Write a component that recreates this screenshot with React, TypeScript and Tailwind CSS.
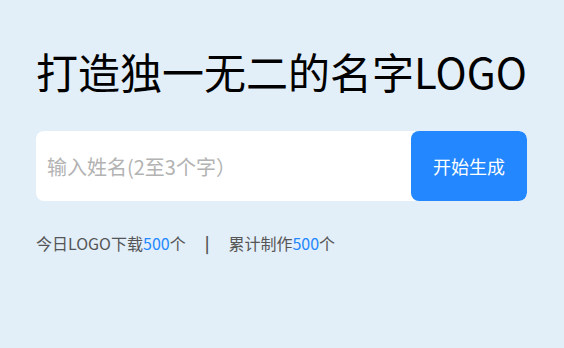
import React from 'react';

export default function App() {
  return (
    <div className="w-[564px] h-[348px] bg-[#e2eef8] px-[36px] pt-[50px] font-['Noto_Sans_CJK_SC',sans-serif]">
      {/* Title */}
      <h1 className="text-[42px] leading-none text-black font-normal">
        打造独一无二的名字LOGO
      </h1>

      {/* Search bar */}
      <div className="mt-[39px] flex h-[70px] w-[491px] rounded-lg bg-white overflow-hidden">
        <input
          type="text"
          placeholder="输入姓名(2至3个字）"
          className="flex-1 min-w-0 h-full pl-[11px] text-[20px] text-[#333] placeholder:text-[#b3b3b3] outline-none bg-transparent font-['Noto_Sans_CJK_SC',sans-serif]"
        />
        <button className="w-[116px] h-full rounded-lg bg-[#2388ff] text-white text-[18px] font-['Noto_Sans_CJK_SC',sans-serif]">
          开始生成
        </button>
      </div>

      {/* Stats */}
      <div className="mt-[34px] flex items-center text-[16px] text-[#555] leading-none">
        <span>
          今日LOGO下载<span className="text-[#2388ff]">500</span>个
        </span>
        <span className="mx-[19px] text-[#555] font-bold">|</span>
        <span>
          累计制作<span className="text-[#2388ff]">500</span>个
        </span>
      </div>
    </div>
  );
}
